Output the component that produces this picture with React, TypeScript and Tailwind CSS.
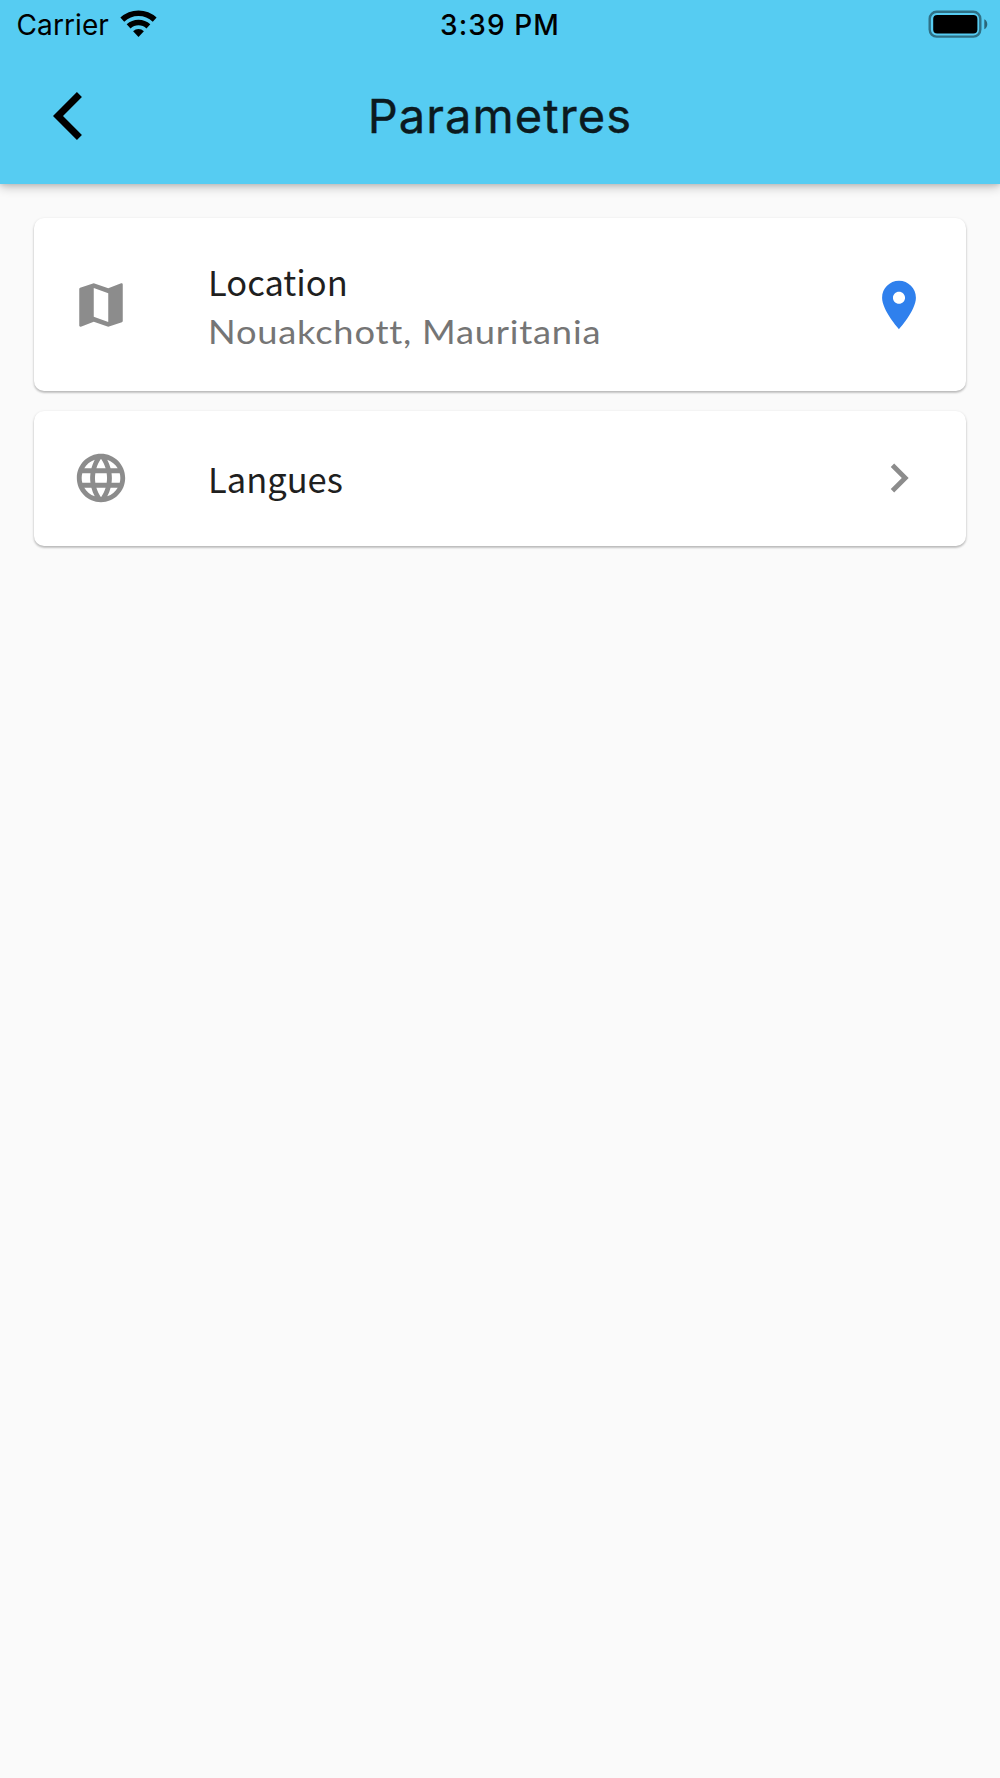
import type { ReactNode } from "react";

function Icon({ d, className }: { d: string; className: string }) {
  return (
    <svg viewBox="0 0 24 24" fill="currentColor" className={`size-[58px] shrink-0 ${className}`}>
      <path d={d} />
    </svg>
  );
}

const BACK = "M11.97 4.17 9.9 2.1 0 12l9.9 9.9 2.07-2.07L4.14 12z";
const MAP =
  "M20.5 3l-.16.03L15 5.1 9 3 3.36 4.9c-.21.07-.36.25-.36.48V20.5c0 .28.22.5.5.5l.16-.03L9 18.9l6 2.1 5.64-1.9c.21-.07.36-.25.36-.48V3.5c0-.28-.22-.5-.5-.5zM15 19l-6-2.11V5l6 2.11V19z";
const PIN =
  "M12 2C8.13 2 5 5.13 5 9c0 5.25 7 13 7 13s7-7.75 7-13c0-3.87-3.13-7-7-7zm0 9.5c-1.38 0-2.5-1.12-2.5-2.5s1.12-2.5 2.5-2.5 2.5 1.12 2.5 2.5-1.12 2.5-2.5 2.5z";
const GLOBE =
  "M11.99 2C6.47 2 2 6.48 2 12s4.47 10 9.99 10C17.52 22 22 17.52 22 12S17.52 2 11.99 2zm6.93 6h-2.95c-.32-1.25-.78-2.45-1.38-3.56 1.84.63 3.37 1.91 4.33 3.56zM12 4.04c.83 1.2 1.48 2.53 1.91 3.96h-3.82c.43-1.43 1.08-2.76 1.91-3.96zM4.26 14C4.1 13.36 4 12.69 4 12s.1-1.36.26-2h3.38c-.08.66-.14 1.32-.14 2 0 .68.06 1.34.14 2H4.26zm.82 2h2.95c.32 1.25.78 2.45 1.38 3.56-1.84-.63-3.37-1.9-4.33-3.56zm2.95-8H5.08c.96-1.66 2.49-2.93 4.33-3.56C8.81 5.55 8.35 6.75 8.03 8zM12 19.96c-.83-1.2-1.48-2.53-1.91-3.96h3.82c-.43 1.43-1.08 2.76-1.91 3.96zM14.34 14H9.66c-.09-.66-.16-1.32-.16-2 0-.68.07-1.35.16-2h4.68c.09.65.16 1.32.16 2 0 .68-.07 1.34-.16 2zm.25 5.56c.6-1.11 1.06-2.31 1.38-3.56h2.95c-.96 1.65-2.49 2.93-4.33 3.56zM16.36 14c.08-.66.14-1.32.14-2 0-.68-.06-1.34-.14-2h3.38c.16.64.26 1.31.26 2s-.1 1.36-.26 2h-3.38z";
const CHEVRON = "M10 6 8.59 7.41 13.17 12l-4.58 4.59L10 18l6-6z";

function StatusBar() {
  return (
    <div className="grid h-12 grid-cols-[1fr_auto_1fr] px-[12.5px] pt-2 text-[28px] leading-[34px] text-black">
      <div className="flex items-start pl-1">
        <span className="tracking-[0.1px]">Carrier</span>
        <svg viewBox="0 0 37 28" className="ml-[11.5px] mt-0.5 h-7 w-[37px]">
          <g fill="none" stroke="#000" strokeWidth="5.6">
            <path d="M2.3 9.6a23.8 23.8 0 0 1 32.4 0" />
            <path d="M8.6 16.4a14.5 14.5 0 0 1 19.8 0" />
          </g>
          <path d="M18.5 27 13.1 21.2a8 8 0 0 1 10.8 0z" />
        </svg>
      </div>
      <span className="font-medium tracking-[1.1px]">3:39 PM</span>
      <svg viewBox="0 0 60 28" className="mt-0.5 h-7 w-[60px] justify-self-end">
        <rect x="1.700" y="1.8" width="50.600" height="24.8" rx="7" fill="none" stroke="#000" strokeOpacity="0.45" strokeWidth="2.4" />
        <rect x="5.2" y="4.9" width="44.2" height="18.6" rx="4" />
        <path d="M56.300 9.200v10c1.9-.9 3-2.8 3-5s-1.100-4.100-3-5z" fillOpacity="0.5" />
      </svg>
    </div>
  );
}

function Card({ icon, trailing, className, children }: { icon: string; trailing: ReactNode; className: string; children: ReactNode }) {
  return (
    <section
      className={`flex items-center rounded-[10px] bg-white px-[38px] shadow-[0_1px_3px_rgba(0,0,0,0.18),0_2px_2px_rgba(0,0,0,0.14)] ${className}`}
    >
      <Icon d={icon} className="text-[#8c8c8c]" />
      <div className="ml-[78px] flex-1">{children}</div>
      {trailing}
    </section>
  );
}

function Label({ children }: { children: ReactNode }) {
  return (
    <h2 className="font-['Noto_Sans_CJK_SC',sans-serif] text-[34.5px] leading-[51px] text-[#1f1f1f]">{children}</h2>
  );
}

export default function App() {
  return (
    <div className="min-h-[1778px] bg-[#fafafa] font-['Inter',sans-serif]">
      <header className="h-[183.500px] bg-[#56ccf2] shadow-[0_3px_10px_rgba(0,0,0,0.24),0_1px_4px_rgba(0,0,0,0.10)]">
        <StatusBar />
        <div className="grid h-[135.500px] grid-cols-[1fr_auto_1fr] items-center px-[53.4px]">
          <Icon d={BACK} className="text-black" />
          <h1 className="text-[47px] leading-[57px] tracking-[1.1px] text-[#0b1a1f] [-webkit-text-stroke:0.4px_#0b1a1f]">Parametres</h1>
        </div>
      </header>
      <main className="flex flex-col gap-5 px-[34px] pt-[34px]">
        <Card icon={MAP} className="h-[173.500px] [&>svg]:mt-px" trailing={<Icon d={PIN} className="text-[#2f80ed]" />}>
          <div className="pb-0.5">
            <Label>Location</Label>
            <p className="mt-1 origin-left scale-x-110 whitespace-nowrap font-['Lato',sans-serif] text-[33px] leading-10 tracking-[0.7px] text-[#757575]">
              Nouakchott, Mauritania
            </p>
          </div>
        </Card>
        <Card icon={GLOBE} className="h-[134.600px]" trailing={<Icon d={CHEVRON} className="text-[#8c8c8c]" />}>
          <Label>Langues</Label>
        </Card>
      </main>
    </div>
  );
}
